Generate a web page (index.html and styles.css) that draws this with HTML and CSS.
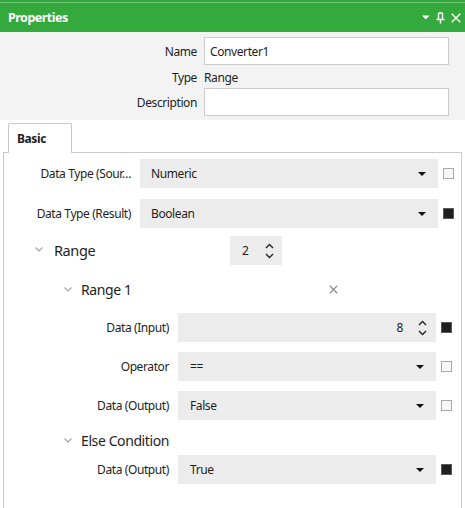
FILE: index.html
```html
<!DOCTYPE html>
<html>
<head>
<meta charset="utf-8">
<link rel="stylesheet" href="styles.css">
</head>
<body>
<div class="window">
  <header class="titlebar">
    <span class="title">Properties</span>
    <div class="title-icons">
      <svg class="ti" width="8" height="5" viewBox="0 0 8 5"><path d="M0 0.5h7.5L3.75 4.5z" fill="#fff"/></svg>
      <svg class="ti" width="9" height="12" viewBox="0 0 9 12"><path d="M2.5 1v6.5M6.5 1v6.5M2.5 1h4M0.5 7.5h8M4.5 7.5v4" stroke="#fff" stroke-width="1.4" fill="none"/></svg>
      <svg class="ti" width="10" height="10" viewBox="0 0 10 10"><path d="M0.7 0.7l8.6 8.6M9.3 0.7l-8.6 8.6" stroke="#fff" stroke-width="1.4"/></svg>
    </div>
  </header>

  <section class="general">
    <div class="grow"><span class="glabel">Name</span><div class="textbox">Converter1</div></div>
    <div class="grow type"><span class="glabel">Type</span><span class="gvalue">Range</span></div>
    <div class="grow"><span class="glabel">Description</span><div class="textbox"></div></div>
  </section>

  <div class="tabs"><div class="tab">Basic</div></div>

  <div class="panel">
    <div class="prow r1">
      <span class="plabel">Data Type (Sour…</span>
      <div class="field combo"><span>Numeric</span><i class="drop"></i></div>
      <span class="check"></span>
    </div>
    <div class="prow r2">
      <span class="plabel">Data Type (Result)</span>
      <div class="field combo"><span>Boolean</span><i class="drop"></i></div>
      <span class="check on"></span>
    </div>

    <div class="ghead range">
      <svg class="chev" width="8" height="5" viewBox="0 0 8 5"><path d="M0.5 0.5l3.5 3.5 3.5-3.5" stroke="#a3a3a3" stroke-width="1.1" fill="none"/></svg>
      <span class="gname wide">Range</span>
      <div class="spin">
        <span class="spinval">2</span>
        <span class="carets">
          <svg width="9" height="6" viewBox="0 0 9 6"><path d="M1 5l3.5-3.5L8 5" stroke="#222" stroke-width="1.4" fill="none"/></svg>
          <svg width="9" height="6" viewBox="0 0 9 6"><path d="M1 1l3.5 3.5L8 1" stroke="#222" stroke-width="1.4" fill="none"/></svg>
        </span>
      </div>
    </div>

    <div class="ghead sub r1h">
      <svg class="chev" width="8" height="5" viewBox="0 0 8 5"><path d="M0.5 0.5l3.5 3.5 3.5-3.5" stroke="#a3a3a3" stroke-width="1.1" fill="none"/></svg>
      <span class="gname sub-name">Range 1</span>
      <svg width="9" height="9" viewBox="0 0 9 9"><path d="M0.8 0.8l7.4 7.4M8.2 0.8l-7.4 7.4" stroke="#8f8f8f" stroke-width="1.3"/></svg>
    </div>

    <div class="prow l2 rin">
      <span class="plabel">Data (Input)</span>
      <div class="field num"><span class="numval">8</span>
        <span class="carets">
          <svg width="9" height="6" viewBox="0 0 9 6"><path d="M1 5l3.5-3.5L8 5" stroke="#222" stroke-width="1.4" fill="none"/></svg>
          <svg width="9" height="6" viewBox="0 0 9 6"><path d="M1 1l3.5 3.5L8 1" stroke="#222" stroke-width="1.4" fill="none"/></svg>
        </span>
      </div>
      <span class="check on"></span>
    </div>
    <div class="prow l2 rstep">
      <span class="plabel">Operator</span>
      <div class="field combo"><span>==</span><i class="drop"></i></div>
      <span class="check"></span>
    </div>
    <div class="prow l2 rstep">
      <span class="plabel">Data (Output)</span>
      <div class="field combo"><span>False</span><i class="drop"></i></div>
      <span class="check"></span>
    </div>

    <div class="ghead sub relse">
      <svg class="chev" width="8" height="5" viewBox="0 0 8 5"><path d="M0.5 0.5l3.5 3.5 3.5-3.5" stroke="#a3a3a3" stroke-width="1.1" fill="none"/></svg>
      <span class="gname">Else Condition</span>
    </div>
    <div class="prow l2">
      <span class="plabel">Data (Output)</span>
      <div class="field combo"><span>True</span><i class="drop"></i></div>
      <span class="check on"></span>
    </div>
  </div>
</div>
</body>
</html>
```

FILE: styles.css
```css
* { box-sizing: border-box; }
html, body { margin: 0; padding: 0; }
body {
  width: 465px;
  height: 508px;
  overflow: hidden;
  background: #fff;
  font-family: "Noto Sans", "Open Sans", sans-serif;
  font-size: 12px;
  letter-spacing: -0.4px;
  color: #1e1e1e;
}
.window { display: flex; flex-direction: column; height: 508px; }

.titlebar {
  height: 32px;
  display: flex;
  align-items: center;
  justify-content: space-between;
  padding: 3px 4px 0 8px;
  background: linear-gradient(#34aa3e 0 2px, #6fc476 2px 3px, #34aa3e 3px);
  color: #fff;
}
.title { font-weight: bold; font-size: 12.5px; letter-spacing: -0.5px; }
.title-icons { display: flex; align-items: center; gap: 6px; }
.ti { display: block; }

.general {
  background: #f3f3f3;
  padding: 5px 16px 4px 0;
  display: flex;
  flex-direction: column;
}
.grow { display: flex; align-items: center; }
.grow.type { height: 23px; padding-top: 1px; }
.glabel { width: 197px; text-align: right; margin-right: 7px; }
.textbox {
  flex: 1;
  height: 28px;
  background: #fff;
  border: 1px solid #cbcbcb;
  display: flex;
  align-items: center;
  padding-left: 5px;
}

.tabs { padding: 3px 0 0 8px; display: flex; }
.tab {
  width: 64px;
  height: 30px;
  border: 1px solid #c9c9c9;
  border-bottom: none;
  border-radius: 2px 2px 0 0;
  background: #fff;
  font-weight: bold;
  padding: 6px 0 0 8px;
  position: relative;
  z-index: 1;
  margin-bottom: -1px;
}

.panel {
  flex: 1;
  margin: 0 3px;
  border: 1px solid #c9c9c9;
  border-bottom: none;
  padding-top: 6px;
  display: flex;
  flex-direction: column;
}

.prow {
  display: flex;
  align-items: center;
  height: 29px;
  padding-right: 7px;
  flex: none;
}
.prow.l2 { padding-left: 38px; padding-right: 9px; }
.prow.r2 { margin-top: 11px; }
.prow.rin { margin-top: 8px; }
.prow.rstep { margin-top: 10px; }
.plabel { width: 127px; text-align: right; margin-right: 9px; white-space: nowrap; }
.field {
  flex: 1;
  height: 29px;
  background: #ececec;
  display: flex;
  align-items: center;
}
.combo { padding: 0 12px 0 11px; justify-content: space-between; }
.prow.l2 .combo { padding-left: 12px; }
.drop {
  width: 0; height: 0;
  border-left: 4px solid transparent;
  border-right: 4px solid transparent;
  border-top: 4px solid #111;
}
.check {
  width: 11px; height: 11px;
  margin-left: 5px;
  border: 1px solid #a8a8a8;
  background: #f7f7f7;
  flex: none;
}
.check.on { background: #1f1f1f; border-color: #5a5a5a; }

.ghead { display: flex; align-items: center; height: 29px; flex: none; padding-bottom: 2px; }
.ghead.range { margin-top: 8px; padding-left: 31px; font-size: 14.5px; }
.ghead.sub { padding-left: 60px; font-size: 14px; }
.ghead.r1h { margin-top: 11px; }
.ghead.relse { margin-top: 7px; height: 28px; padding-bottom: 1px; }
.chev { display: block; flex: none; }
.gname { margin-left: 11px; }
.ghead.sub .gname { margin-left: 9px; }
.gname.wide { width: 176px; }
.gname.sub-name { width: 248px; }

.spin {
  width: 52px;
  height: 29px;
  background: #ececec;
  display: flex;
  align-items: center;
  font-size: 12px;
  padding-left: 12px;
  align-self: flex-start;
}
.spinval { width: 23px; }
.carets { display: flex; flex-direction: column; gap: 4px; }
.carets svg { display: block; }

.num { justify-content: flex-end; padding-right: 9px; }
.numval { margin-right: 15px; }
```
